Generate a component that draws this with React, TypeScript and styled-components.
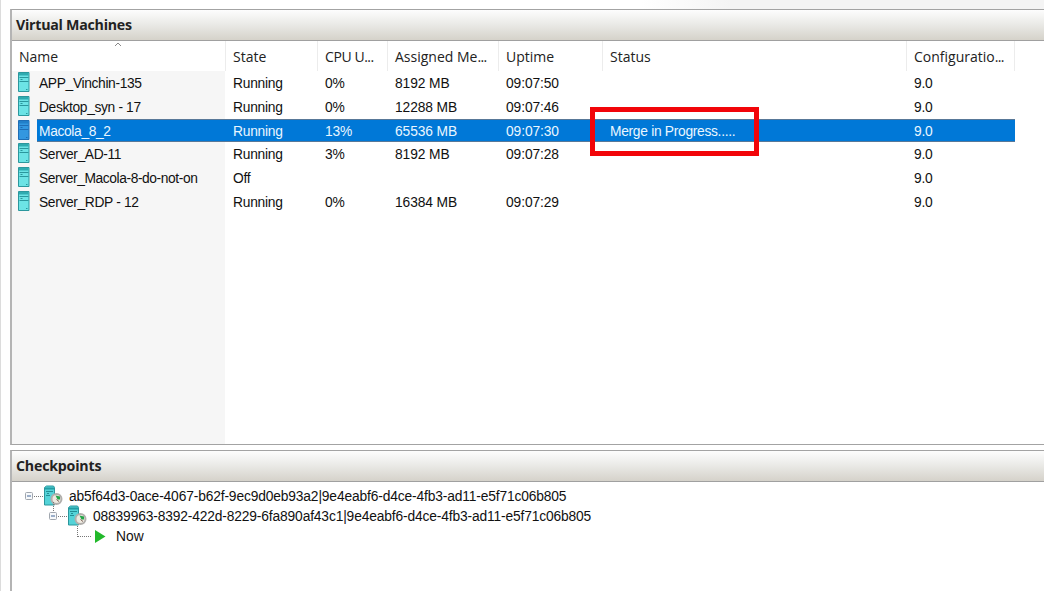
import React from "react";
import styled, { createGlobalStyle } from "styled-components";

const Global = createGlobalStyle`
  html, body { margin: 0; padding: 0; background: #fff; overflow: hidden; }
  * { box-sizing: border-box; }
`;

const COLUMNS = "214px 92px 70px 111px 104px 304px 108px";

const Page = styled.main`
  width: 1044px;
  height: 591px;
  padding: 9px 0 0 9px;
  border-left: 1px solid #dcdcdc;
  background: linear-gradient(90deg, #fff 640px, #f4f4f4 730px) 0 0 / 100% 9px no-repeat #fff;
  display: flex;
  flex-direction: column;
  gap: 5px;
  overflow: hidden;
  color: #111;
  font: 13.8px/20px "Liberation Sans", Arial, sans-serif;
`;

const Panel = styled.section<{ $height: number }>`
  height: ${(p) => p.$height}px;
  flex: none;
  border: 1px solid #a3a3a3;
  border-left: 2px solid #b4b4b4;
  border-right: 0;
  display: flex;
  flex-direction: column;
  background: #fff;
`;

const PanelTitle = styled.h2<{ $spacing: number }>`
  margin: 0;
  height: 31px;
  flex: none;
  padding: 0 0 1px 4px;
  border-bottom: 1px solid #a0a0a0;
  background: linear-gradient(#fdfdfd, #ebebe8 45%, #d5d2ca);
  font: bold 14.2px/29px "Open Sans", "Noto Sans", sans-serif;
  letter-spacing: ${(p) => p.$spacing}px;
  color: #222;
`;

const Table = styled.div`
  flex: 1;
  display: flex;
  flex-direction: column;
  background: linear-gradient(#f6f6f6, #f6f6f6) 0 30px / 213px 100% no-repeat #fff;
`;

const HeadRow = styled.div`
  display: grid;
  grid-template-columns: ${COLUMNS};
  height: 30px;
`;

const HeadCell = styled.div<{ $spacing?: number }>`
  position: relative;
  padding: 6px 0 0 7px;
  border-right: 1px solid #ececec;
  white-space: nowrap;
  font: 14px/20px "Open Sans", "Noto Sans", sans-serif;
  letter-spacing: ${(p) => p.$spacing ?? 0}px;
  color: #222;
`;

const Dots = styled.span`
  letter-spacing: -0.6px;
`;

const SortMark = styled.svg`
  position: absolute;
  left: 102px;
  top: 1px;
`;

const Row = styled.div<{ $selected?: boolean }>`
  display: grid;
  grid-template-columns: ${COLUMNS};
  height: 23.8px;
  line-height: 25px;
  color: ${(p) => (p.$selected ? "#e9f6ff" : "#111")};
  background: ${(p) =>
    p.$selected
      ? "linear-gradient(#587898 1px, #0078d7 1px, #0078d7 calc(100% - 1px), #587898 calc(100% - 1px)) 25px 0 / 978px 100% no-repeat"
      : "none"};
`;

const Cell = styled.div<{ $spacing?: number }>`
  padding-left: 7px;
  white-space: nowrap;
  letter-spacing: ${(p) => p.$spacing ?? -0.2}px;
`;

const NameCell = styled(Cell)`
  display: flex;
  gap: 9px;
  padding-left: 6px;
`;

const StatusCell = styled(Cell)`
  position: relative;
`;

const Highlight = styled.div`
  position: absolute;
  left: -13px;
  top: -12px;
  width: 169px;
  height: 49px;
  border: 5px solid #f20509;
`;

const Tree = styled.div`
  padding-top: 4px;
  display: flex;
  flex-direction: column;
`;

const TreeRow = styled.div<{ $indent: number }>`
  display: flex;
  align-items: center;
  height: 20px;
  padding-left: ${(p) => p.$indent}px;
  white-space: nowrap;
`;

const TreeLabel = styled.span<{ $gap: number; $spacing?: number }>`
  margin-left: ${(p) => p.$gap}px;
  padding-top: 2px;
  letter-spacing: ${(p) => p.$spacing ?? -0.147}px;
`;

const ServerIcon = ({ selected }: { selected?: boolean }) => {
  const dark = selected ? "#1f6db5" : "#2b979d";
  const fill = selected ? "#3397e0" : "#6ce3e5";
  return (
    <svg width="12" height="22" viewBox="0 0 12 22">
      <path d="M.5 1.500h10.500v19H.5z" fill={fill} stroke={dark} />
      <path d="M1 2h9.500v2.500H1z" fill={selected ? "#217fc9" : "#2fabb0"} />
      <path d="M1.500 6.500h9M1.500 10.500h9" stroke={dark} />
      <path d="M2.500 8.500h2M8 18.500h1.500" stroke={dark} />
    </svg>
  );
};

const CheckpointIcon = () => (
  <svg width="19" height="22" viewBox="0 0 19 22">
    <path d="M.5 2.500l2-1.500h7l1 1.500v17.500H.5z" fill="#54d3d8" stroke="#2b969c" />
    <path d="M1 2.500h9v2H1z" fill="#249da4" />
    <path d="M2 6.500h7M2 10.500h4M3 8.500h2" stroke="#238e95" />
    <circle cx="12.500" cy="14" r="5" fill="#eee9e0" stroke="#b1afac" strokeWidth="2" />
    <path d="M11.500 10.500l4.500 1v3h-2.500z" fill="#23a548" />
    <path d="M12.500 14.500l2.500 2" stroke="#795f54" />
  </svg>
);

const Expander = () => (
  <svg width="19" height="20" viewBox="0 0 19 20">
    <rect x=".5" y="6.500" width="7" height="7" rx="1" fill="#f7f9fb" stroke="#a0a6ae" />
    <path d="M2 10h4" stroke="#416597" />
    <path d="M9 10.500h9" stroke="#777" strokeDasharray="1 1" />
  </svg>
);

const Branch = styled.svg`
  position: absolute;
  left: 4px;
  top: -4px;
`;

const ExpanderSlot = styled.span`
  position: relative;
  display: flex;
  height: 20px;
`;

const machines = [
  ["APP_Vinchin-135", "Running", "0%", "8192 MB", "09:07:50"],
  ["Desktop_syn - 17", "Running", "0%", "12288 MB", "09:07:46"],
  ["Macola_8_2", "Running", "13%", "65536 MB", "09:07:30"],
  ["Server_AD-11", "Running", "3%", "8192 MB", "09:07:28"],
  ["Server_Macola-8-do-not-on", "Off", "", "", ""],
  ["Server_RDP - 12", "Running", "0%", "16384 MB", "09:07:29"],
];

export default function App() {
  return (
    <>
      <Global />
      <Page>
        <Panel $height={436}>
          <PanelTitle $spacing={-0.25}>Virtual Machines</PanelTitle>
          <Table>
            <HeadRow>
              <HeadCell>
                Name
                <SortMark width="8" height="5" viewBox="0 0 8 5">
                  <path d="M1 4l3-3 3 3" fill="none" stroke="#888" />
                </SortMark>
              </HeadCell>
              <HeadCell>State</HeadCell>
              <HeadCell $spacing={-0.4}>CPU U<Dots>...</Dots></HeadCell>
              <HeadCell>Assigned Me<Dots>...</Dots></HeadCell>
              <HeadCell>Uptime</HeadCell>
              <HeadCell>Status</HeadCell>
              <HeadCell>Configuratio<Dots>...</Dots></HeadCell>
            </HeadRow>
            {machines.map(([name, state, cpu, memory, uptime]) => {
              const selected = name === "Macola_8_2";
              return (
                <Row key={name} $selected={selected}>
                  <NameCell $spacing={name.length > 20 ? -0.41 : -0.35}>
                    <ServerIcon selected={selected} />
                    <span>{name}</span>
                  </NameCell>
                  <Cell $spacing={-0.25}>{state}</Cell>
                  <Cell>{cpu}</Cell>
                  <Cell $spacing={-0.1}>{memory}</Cell>
                  <Cell $spacing={-0.1}>{uptime}</Cell>
                  <StatusCell $spacing={-0.3}>
                    {selected && (
                      <>
                        Merge in Progress.....
                        <Highlight />
                      </>
                    )}
                  </StatusCell>
                  <Cell>9.0</Cell>
                </Row>
              );
            })}
          </Table>
        </Panel>
        <Panel $height={150}>
          <PanelTitle $spacing={-0.2}>Checkpoints</PanelTitle>
          <Tree>
            <TreeRow $indent={13}>
              <Expander />
              <CheckpointIcon />
              <TreeLabel $gap={6}>ab5f64d3-0ace-4067-b62f-9ec9d0eb93a2|9e4eabf6-d4ce-4fb3-ad11-e5f71c06b805</TreeLabel>
            </TreeRow>
            <TreeRow $indent={37}>
              <ExpanderSlot>
                <Branch width="1" height="10"><path d="M.5 0v10" stroke="#777" strokeDasharray="1 1" /></Branch>
                <Expander />
              </ExpanderSlot>
              <CheckpointIcon />
              <TreeLabel $gap={6}>08839963-8392-422d-8229-6fa890af43c1|9e4eabf6-d4ce-4fb3-ad11-e5f71c06b805</TreeLabel>
            </TreeRow>
            <TreeRow $indent={65}>
              <svg width="29" height="20" viewBox="0 0 29 20">
                <path d="M.5 0v11M1 10.500h13" fill="none" stroke="#777" strokeDasharray="1 1" />
                <path d="M18 4l10.500 6.500L18 17z" fill="#22b92b" />
              </svg>
              <TreeLabel $gap={10} $spacing={0}>Now</TreeLabel>
            </TreeRow>
          </Tree>
        </Panel>
      </Page>
    </>
  );
}
